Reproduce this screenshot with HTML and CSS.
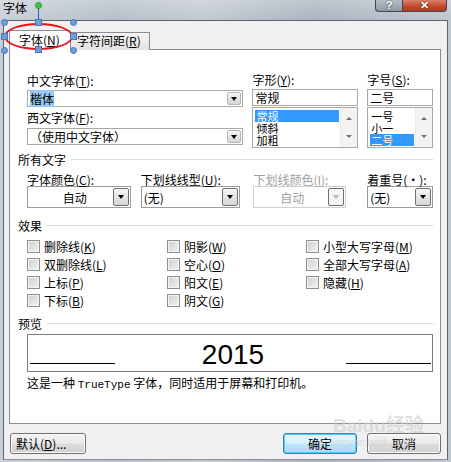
FILE: index.html
```html
<!DOCTYPE html>
<html lang="zh-CN">
<head>
  <meta charset="UTF-8" />
  <title>字体</title>
  <link rel="stylesheet" href="styles.css">
</head>
<body>
  <div class="window">
    <div class="titlebar">
      <span class="title">字体</span>
      <div class="caption-buttons">
        <span class="cap-btn help">?</span>
        <span class="cap-btn close">✕</span>
      </div>
    </div>

    <div class="client">
      <div class="tabs">
        <div class="tab active">字体(<u>N</u>)</div>
        <div class="tab">字符间距(<u>R</u>)</div>
      </div>

      <div class="panel">
        <!-- 字体 / 字形 / 字号 -->
        <div class="font-row indent">
          <div class="col-font">
            <div class="label">中文字体(<u>T</u>):</div>
            <div class="combo small">
              <span class="value"><span class="sel">楷体</span></span>
              <span class="drop"><i class="tri"></i></span>
            </div>
            <div class="label gap-top">西文字体(<u>F</u>):</div>
            <div class="combo small">
              <span class="value">（使用中文字体）</span>
              <span class="drop"><i class="tri"></i></span>
            </div>
          </div>

          <div class="col-style">
            <div class="label">字形(<u>Y</u>):</div>
            <div class="textbox">常规</div>
            <div class="listbox">
              <div class="items">
                <div class="item selected">常规</div>
                <div class="item">倾斜</div>
                <div class="item">加粗</div>
              </div>
              <div class="scroll"><i class="up"></i><i class="down"></i></div>
            </div>
          </div>

          <div class="col-size">
            <div class="label">字号(<u>S</u>):</div>
            <div class="textbox">二号</div>
            <div class="listbox">
              <div class="items">
                <div class="item">一号</div>
                <div class="item">小一</div>
                <div class="item selected">二号</div>
              </div>
              <div class="scroll"><i class="up"></i><i class="down"></i></div>
            </div>
          </div>
        </div>

        <!-- 所有文字 -->
        <div class="group-head head-all"><span>所有文字</span><i class="rule"></i></div>
        <div class="all-row indent">
          <div class="field f-color">
            <div class="label">字体颜色(<u>C</u>):</div>
            <div class="combo big">
              <span class="value center">自动</span>
              <span class="drop"><i class="tri"></i></span>
            </div>
          </div>
          <div class="field f-under">
            <div class="label">下划线线型(<u>U</u>):</div>
            <div class="combo big">
              <span class="value">(无)</span>
              <span class="drop"><i class="tri"></i></span>
            </div>
          </div>
          <div class="field f-ucolor disabled">
            <div class="label">下划线颜色(<u>I</u>):</div>
            <div class="combo big">
              <span class="value center">自动</span>
              <span class="drop"><i class="tri"></i></span>
            </div>
          </div>
          <div class="field f-emph">
            <div class="label">着重号(·):</div>
            <div class="combo big">
              <span class="value">(无)</span>
              <span class="drop"><i class="tri"></i></span>
            </div>
          </div>
        </div>

        <!-- 效果 -->
        <div class="group-head head-fx"><span>效果</span><i class="rule"></i></div>
        <div class="effects indent">
          <label class="check"><i class="box"></i>删除线(<u>K</u>)</label>
          <label class="check"><i class="box"></i>阴影(<u>W</u>)</label>
          <label class="check"><i class="box"></i>小型大写字母(<u>M</u>)</label>
          <label class="check"><i class="box"></i>双删除线(<u>L</u>)</label>
          <label class="check"><i class="box"></i>空心(<u>O</u>)</label>
          <label class="check"><i class="box"></i>全部大写字母(<u>A</u>)</label>
          <label class="check"><i class="box"></i>上标(<u>P</u>)</label>
          <label class="check"><i class="box"></i>阳文(<u>E</u>)</label>
          <label class="check"><i class="box"></i>隐藏(<u>H</u>)</label>
          <label class="check"><i class="box"></i>下标(<u>B</u>)</label>
          <label class="check"><i class="box"></i>阴文(<u>G</u>)</label>
        </div>

        <!-- 预览 -->
        <div class="group-head head-pre"><span>预览</span><i class="rule"></i></div>
        <div class="indent">
          <div class="preview">
            <i class="line"></i>
            <span class="sample">2015</span>
            <i class="line"></i>
          </div>
          <p class="note">这是一种 <span class="mono">TrueType</span> 字体，同时适用于屏幕和打印机。</p>
        </div>
      </div>

      <div class="footer">
        <button class="btn btn-default">默认(<u>D</u>)...</button>
        <div class="footer-right">
          <button class="btn focused">确定</button>
          <button class="btn">取消</button>
        </div>
      </div>
    </div>
  </div>

  <!-- annotation drawn over the tab -->
  <div class="mark">
    <div class="ellipse"></div>
    <i class="stem"></i>
    <i class="rot"></i>
    <i class="h c tl"></i><i class="h c tr"></i><i class="h c bl"></i><i class="h c br"></i>
    <i class="h s tm"></i><i class="h s bm"></i><i class="h s ml"></i><i class="h s mr"></i>
  </div>

  <div class="watermark">
    <span class="wm-big">Bai<b>du</b>经验</span>
    <span class="wm-small">jingyan.baidu.com</span>
  </div>
</body>
</html>
```

FILE: styles.css
```css
* {
  box-sizing: border-box;
}

body {
  margin: 0;
  width: 451px;
  height: 462px;
  overflow: hidden;
  position: relative;
  font-family: "Noto Sans CJK SC", "Liberation Sans", sans-serif;
  font-size: 12px;
  color: #000;
  background: #9aa3ad;
}

u {
  text-decoration: underline;
}

.window {
  height: 462px;
  padding: 0 3px 2px 3px;
  background:
    linear-gradient(180deg, rgba(255,255,255,0.25), rgba(255,255,255,0) 20px),
    linear-gradient(90deg, #c8cfd6 0%, #b6bfc8 25%, #c2c9d0 45%, #aab4be 70%, #bfc6ce 100%);
}

/* title bar */
.titlebar {
  height: 20px;
  display: flex;
  justify-content: space-between;
  align-items: flex-start;
}

.title {
  line-height: 16px;
  font-size: 12px;
}

.caption-buttons {
  display: flex;
  margin-right: 1px;
}

.cap-btn {
  height: 12px;
  border: 1px solid #3e4650;
  border-top: none;
  color: #fff;
  font: bold 11px/10px "Liberation Sans", sans-serif;
  text-align: center;
}

.help {
  width: 27px;
  border-radius: 0 0 0 4px;
  border-right: none;
  background: linear-gradient(#b5bcc4, #8f99a5);
  text-shadow: 0 0 2px #333;
}

.close {
  width: 45px;
  border-radius: 0 0 4px 0;
  background: linear-gradient(#d9826e, #c4462c 60%, #b03a22);
  text-shadow: 0 0 2px #400;
}

/* client area */
.client {
  height: 440px;
  background: #f0f0f0;
  border: 1px solid #5d6670;
  border-bottom-color: #8b939c;
}

.tabs {
  display: flex;
  align-items: flex-end;
  padding: 9px 0 0 5px;
  margin-bottom: -1px;
}

.tab {
  height: 18px;
  padding: 0 6px;
  line-height: 16px;
  border: 1px solid #898c95;
  border-bottom: none;
  background: linear-gradient(#f4f4f4, #e3e3e3);
}

.tab.active {
  position: relative;
  z-index: 1;
  width: 61px;
  height: 20px;
  line-height: 18px;
  padding-left: 9px;
  background: #fff;
  border-right: none;
}

.tab + .tab {
  width: 80px;
}

.panel {
  height: 375px;
  margin: 0 6px 0 5px;
  padding: 23px 7px 0 8px;
  background: #fff;
  border: 1px solid #898c95;
}

.indent {
  padding-left: 9px;
}

.label {
  height: 13px;
  line-height: 13px;
  white-space: nowrap;
}

/* font row */
.font-row {
  display: flex;
  height: 74px;
}

.col-font {
  width: 217px;
}

.col-font .label {
  margin-top: 1px;
  margin-bottom: 3px;
}

.col-font .gap-top {
  margin-top: 4px;
  margin-bottom: 4px;
}

.col-style {
  width: 106px;
  margin-left: 9px;
}

.col-size {
  width: 66px;
  margin-left: 9px;
}

.col-style .label,
.col-size .label {
  margin-bottom: 3px;
}

.combo {
  display: flex;
  align-items: center;
  border: 1px solid #a9a9a9;
  background: #fff;
  padding: 1px;
}

.combo.small {
  height: 17px;
}

.combo.big {
  height: 22px;
  border-color: #9c9c9c;
}

.combo .value {
  flex: 1;
  padding-left: 1px;
  line-height: 13px;
  white-space: nowrap;
}

.combo .value.center {
  text-align: center;
}

.sel {
  background: #99c9ef;
}

.drop {
  display: flex;
  align-items: center;
  justify-content: center;
  align-self: stretch;
  width: 14px;
  border: 1px solid #b5b5b5;
  border-radius: 2px;
  background: linear-gradient(#f7f7f7, #e4e4e4 50%, #d6d6d6);
}

.combo.big .drop {
  width: 16px;
  border-color: #707070;
}

.tri {
  width: 0;
  height: 0;
  border-left: 3.5px solid transparent;
  border-right: 3.5px solid transparent;
  border-top: 4px solid #000;
}

.textbox {
  height: 17px;
  padding-left: 2px;
  line-height: 15px;
  border: 1px solid #a9a9a9;
  background: #fff;
}

.listbox {
  display: flex;
  height: 41px;
  margin-top: 1px;
  border: 1px solid #a9a9a9;
  background: #fff;
  overflow: hidden;
}

.items {
  flex: 1;
  padding: 2px 1px 0 2px;
}

.item {
  height: 12px;
  line-height: 12px;
  font-size: 11px;
  padding-left: 1px;
}

.item.selected {
  background: #3399ff;
  color: #fff;
}

.scroll {
  width: 17px;
  display: flex;
  flex-direction: column;
  justify-content: space-between;
  align-items: center;
  padding: 9px 0 9px;
  background: #f3f3f3;
  border-left: 1px solid #ececec;
}

.scroll .up {
  border-left: 3px solid transparent;
  border-right: 3px solid transparent;
  border-bottom: 3px solid #707070;
}

.scroll .down {
  border-left: 3px solid transparent;
  border-right: 3px solid transparent;
  border-top: 3px solid #707070;
}

/* group headers */
.group-head {
  display: flex;
  align-items: center;
  height: 13px;
  line-height: 13px;
}

.group-head .rule {
  flex: 1;
  height: 1px;
  margin-left: 5px;
  background: #d5dfe5;
}

.head-all {
  margin-top: 6px;
}

.head-fx {
  margin-top: 11px;
}

.head-pre {
  margin-top: 8px;
}

/* 所有文字 row */
.all-row {
  display: flex;
  margin-top: 7px;
}

.f-color {
  width: 104px;
}

.f-under {
  width: 100px;
  margin-left: 10px;
}

.f-ucolor {
  width: 93px;
  margin-left: 13px;
}

.f-emph {
  width: 66px;
  margin-left: 21px;
}

.f-color .combo .value {
  padding-left: 8px;
}

.disabled .label,
.disabled .value {
  color: #a0a0a0;
}

.disabled .combo {
  border-color: #d0d0d0;
}

.disabled .drop {
  border-color: #dcdcdc;
  background: #f4f4f4;
}

.disabled .tri {
  border-top-color: #b8b8b8;
}

/* effects */
.effects {
  display: grid;
  grid-template-columns: 140px 139px 1fr;
  grid-auto-rows: 18px;
  margin-top: 5px;
}

.check {
  display: flex;
  align-items: center;
  line-height: 13px;
  white-space: nowrap;
}

.box {
  width: 13px;
  height: 13px;
  margin-right: 4px;
  border: 1px solid #8e8f8f;
  box-shadow: inset 0 0 0 1px #f4f4f4;
  background: linear-gradient(135deg, #cfcfcf, #f2f2f2);
}

/* preview */
.preview {
  display: flex;
  align-items: flex-end;
  justify-content: space-between;
  height: 38px;
  margin-top: 4px;
  padding: 0 1px 7px 2px;
  border: 1px solid #7a7a7a;
}

.preview .line {
  width: 85px;
  height: 1px;
  background: #000;
}

.sample {
  font: 28px/28px "Liberation Sans", Arial, sans-serif;
  margin-bottom: -5px;
  margin-left: 5px;
}

.note {
  margin: 4px 0 0;
  line-height: 13px;
}

.mono {
  font-family: "Liberation Mono", monospace;
  font-size: 11px;
}

/* footer */
.footer {
  display: flex;
  justify-content: space-between;
  padding: 9px 6px 0 6px;
}

.footer-right {
  display: flex;
  gap: 10px;
}

.btn {
  width: 74px;
  height: 21px;
  padding: 0;
  font: 12px/17px "Noto Sans CJK SC", sans-serif;
  color: #000;
  border: 1px solid #707070;
  border-radius: 3px;
  background: linear-gradient(#f2f2f2 0%, #ebebeb 48%, #dddddd 52%, #cfcfcf 100%);
  box-shadow: inset 0 0 0 1px #fcfcfc;
}

.btn-default {
  width: 76px;
  text-align: left;
  padding-left: 5px;
}

.btn.focused {
  border-color: #3c7fb1;
  box-shadow: inset 0 0 0 1px #48d0f8;
  background: linear-gradient(#eaf6fd 0%, #d9f0fc 48%, #bee6fd 52%, #a7d9f5 100%);
}

/* annotation overlay */
.mark {
  position: absolute;
  z-index: 5;
  left: 0;
  top: 0;
  width: 80px;
  height: 56px;
  pointer-events: none;
}

.ellipse {
  position: absolute;
  left: 4px;
  top: 23px;
  width: 69px;
  height: 27px;
  border: 2px solid #e8141b;
  border-radius: 50%;
}

.stem {
  position: absolute;
  left: 38px;
  top: 8px;
  width: 1px;
  height: 14px;
  background: #2a52d8;
}

.rot {
  position: absolute;
  left: 35px;
  top: 2px;
  width: 7px;
  height: 7px;
  border-radius: 50%;
  background: #3ec83e;
  border: 1px solid #2b9a2b;
}

.h {
  position: absolute;
  width: 7px;
  height: 7px;
  background: #6f9ed8;
  border: 1px solid #4a78b4;
}

.h.c {
  border-radius: 50%;
}

.tl { left: 1px; top: 19px; }
.tr { left: 70px; top: 19px; }
.bl { left: 1px; top: 47px; }
.br { left: 70px; top: 47px; }
.tm { left: 35px; top: 19px; }
.bm { left: 35px; top: 46px; }
.ml { left: 1px; top: 33px; }
.mr { left: 70px; top: 33px; }

/* watermark */
.watermark {
  position: absolute;
  z-index: 5;
  left: 333px;
  top: 415px;
  display: flex;
  flex-direction: column;
  color: rgba(205, 205, 205, 0.6);
  pointer-events: none;
}

.wm-big {
  font: bold 19px/22px "Liberation Sans", "Noto Sans CJK SC", sans-serif;
}

.wm-small {
  font: 10px/12px "Liberation Sans", sans-serif;
}
```
